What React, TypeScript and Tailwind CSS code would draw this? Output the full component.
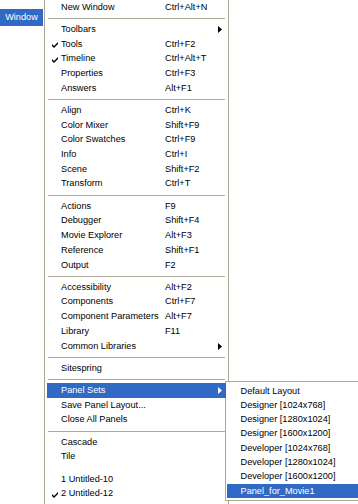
import React from "react";

type Item =
  | { kind: "sep"; blank?: boolean }
  | { kind: "item"; label: string; sc?: string; check?: boolean; sub?: boolean; active?: boolean };

const it = (label: string, sc?: string, extra: Partial<Item & { kind: "item" }> = {}): Item => ({
  kind: "item",
  label,
  sc,
  ...extra,
});
const sep: Item = { kind: "sep" };

const mainItems: Item[] = [
  it("New Window", "Ctrl+Alt+N"),
  sep,
  it("Toolbars", undefined, { sub: true }),
  it("Tools", "Ctrl+F2", { check: true }),
  it("Timeline", "Ctrl+Alt+T", { check: true }),
  it("Properties", "Ctrl+F3"),
  it("Answers", "Alt+F1"),
  sep,
  it("Align", "Ctrl+K"),
  it("Color Mixer", "Shift+F9"),
  it("Color Swatches", "Ctrl+F9"),
  it("Info", "Ctrl+I"),
  it("Scene", "Shift+F2"),
  it("Transform", "Ctrl+T"),
  sep,
  it("Actions", "F9"),
  it("Debugger", "Shift+F4"),
  it("Movie Explorer", "Alt+F3"),
  it("Reference", "Shift+F1"),
  it("Output", "F2"),
  sep,
  it("Accessibility", "Alt+F2"),
  it("Components", "Ctrl+F7"),
  it("Component Parameters", "Alt+F7"),
  it("Library", "F11"),
  it("Common Libraries", undefined, { sub: true }),
  sep,
  it("Sitespring"),
  sep,
  it("Panel Sets", undefined, { sub: true, active: true }),
  it("Save Panel Layout..."),
  it("Close All Panels"),
  sep,
  it("Cascade"),
  it("Tile"),
  { kind: "sep", blank: true },
  it("1 Untitled-10"),
  it("2 Untitled-12", undefined, { check: true }),
];

const subItems = [
  "Default Layout",
  "Designer [1024x768]",
  "Designer [1280x1024]",
  "Designer [1600x1200]",
  "Developer [1024x768]",
  "Developer [1280x1024]",
  "Developer [1600x1200]",
  "Panel_for_Movie1",
];

function Check({ white }: { white?: boolean }) {
  return (
    <svg width="6" height="7" viewBox="0 0 6 7" className="shrink-0">
      <polygon points="0,3 2,5 6,1 6,3 2,7 0,5" fill={white ? "#fff" : "#000"} />
    </svg>
  );
}

function Arrow({ white }: { white?: boolean }) {
  return (
    <svg width="4" height="7" viewBox="0 0 4 7">
      <polygon points="0,0 4,3.5 0,7" fill={white ? "#fff" : "#000"} />
    </svg>
  );
}

export default function App() {
  return (
    <div
      className="w-[358px] h-[504px] overflow-hidden bg-white flex items-start text-black text-[9.2px] leading-none"
      style={{ fontFamily: '"Liberation Sans", Arial, sans-serif' }}
    >
      {/* menubar item */}
      <div className="w-[44px] shrink-0 pt-[9px]">
        <div className="h-[17px] w-[43px] bg-[#316AC5] text-white flex items-center justify-center">Window</div>
      </div>

      {/* main dropdown */}
      <div className="w-[185px] shrink-0 h-[504px] bg-white border-l border-r border-[#ACA899] px-[2px]">
        {mainItems.map((m, i) =>
          m.kind === "sep" ? (
            <div key={i} className="h-[7.6px] flex items-center pl-[1px] pr-[1px]">
              {!m.blank && <div className="h-px w-full bg-[#ACA899]" />}
            </div>
          ) : (
            <div
              key={i}
              className={`h-[14.7px] flex items-center relative ${m.active ? "bg-[#316AC5] text-white" : ""}`}
            >
              <div className="w-[14px] shrink-0 flex justify-start pl-[5px]">{m.check && <Check white={m.active} />}</div>
              <div className="w-[104px] shrink-0 whitespace-nowrap">{m.label}</div>
              <div className="w-[53px] shrink-0 whitespace-nowrap">{m.sc ?? ""}</div>
              <div className="w-[6px] shrink-0 flex items-center">{m.sub && <Arrow white={m.active} />}</div>
            </div>
          )
        )}
      </div>

      {/* submenu */}
      <div className="w-[135px] shrink-0 ml-[-4px] mt-[381px] bg-white border border-[#ACA899] pt-[2px] pb-[2px] px-px">
        {subItems.map((s, i) => (
          <div
            key={i}
            className={`h-[14.3px] flex items-center pl-[13.5px] whitespace-nowrap ${
              i === subItems.length - 1 ? "bg-[#316AC5] text-white" : ""
            }`}
          >
            {s}
          </div>
        ))}
      </div>
    </div>
  );
}
